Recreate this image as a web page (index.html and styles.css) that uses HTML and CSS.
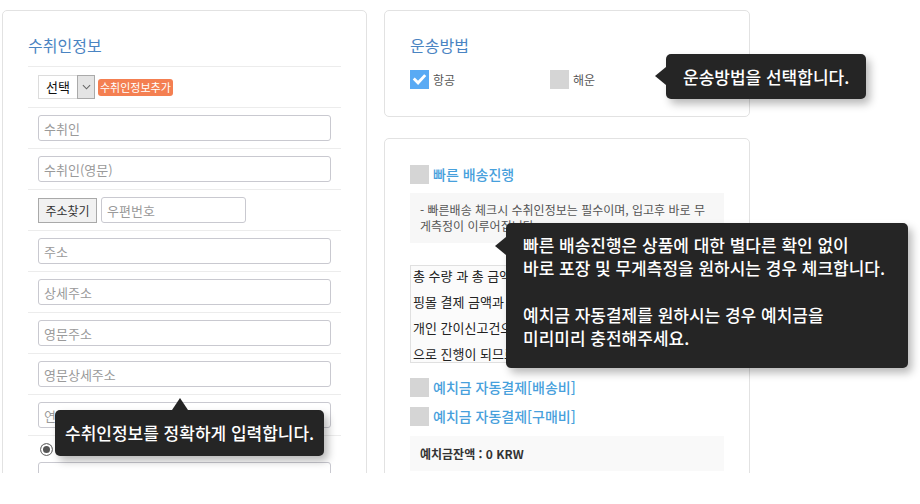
FILE: index.html
```html
<!DOCTYPE html>
<html lang="ko">

<head>
  <meta charset="UTF-8" />
  <title>배송대행 신청</title>
  <link rel="stylesheet" href="styles.css">
</head>

<body>
  <div class="page">
    <!-- 수취인정보 -->
    <div class="card receiver">
      <h3 class="card-title">수취인정보</h3>
      <ul class="form-list">
        <li class="row-select">
          <div class="select">
            <span class="select-text">선택</span>
            <span class="select-arrow">
              <svg viewBox="0 0 10 6" fill="none" stroke="#666" stroke-width="1.2">
                <polyline points="1 1 5 5 9 1"></polyline>
              </svg>
            </span>
          </div>
          <span class="badge">수취인정보추가</span>
        </li>
        <li><input type="text" placeholder="수취인" /></li>
        <li><input type="text" placeholder="수취인(영문)" /></li>
        <li class="row-zip">
          <button class="btn-zip">주소찾기</button>
          <input type="text" class="input-zip" placeholder="우편번호" />
        </li>
        <li><input type="text" placeholder="주소" /></li>
        <li><input type="text" placeholder="상세주소" /></li>
        <li><input type="text" placeholder="영문주소" /></li>
        <li><input type="text" placeholder="영문상세주소" /></li>
        <li><input type="text" placeholder="연락처" /></li>
        <li class="row-radio">
          <span class="radio"></span>
          <input type="text" />
        </li>
      </ul>
    </div>

    <div class="side">
      <!-- 운송방법 -->
      <div class="card shipping">
        <h3 class="card-title">운송방법</h3>
        <div class="options">
          <label class="option">
            <span class="check checked">
              <svg viewBox="0 0 20 20" fill="none" stroke="#fff" stroke-width="3" stroke-linecap="square">
                <polyline points="5 10 8.5 13.5 15 6.5"></polyline>
              </svg>
            </span>
            항공
          </label>
          <label class="option"><span class="check"></span>해운</label>
        </div>
      </div>

      <!-- 결제 옵션 -->
      <div class="card payment">
        <label class="check-title"><span class="check"></span>빠른 배송진행</label>
        <p class="notice">- 빠른배송 체크시 수취인정보는 필수이며, 입고후 바로 무게측정이 이루어집니다.</p>
        <div class="terms">
          <div>총 수량 과 총 금액은 구매대행 신청서 기준이며, 실제 쇼</div>
          <div>핑몰 결제 금액과 차이가 있을 수 있습니다. 150달러 이하</div>
          <div>개인 간이신고건으로 진행되며, 초과시 일반 수입신고</div>
          <div>으로 진행이 되므로 관부가세가 발생할 수 있습니다.</div>
        </div>
        <label class="check-title"><span class="check"></span>예치금 자동결제[배송비]</label>
        <label class="check-title"><span class="check"></span>예치금 자동결제[구매비]</label>
        <div class="balance">예치금잔액 : 0 KRW</div>
      </div>
    </div>

    <!-- 도움말 -->
    <div class="tip tip-up tip-receiver">수취인정보를 정확하게 입력합니다.</div>
    <div class="tip tip-left tip-shipping">운송방법을 선택합니다.</div>
    <div class="tip tip-left tip-express">
      빠른 배송진행은 상품에 대한 별다른 확인 없이<br>
      바로 포장 및 무게측정을 원하시는 경우 체크합니다.<br>
      <br>
      예치금 자동결제를 원하시는 경우 예치금을<br>
      미리미리 충전해주세요.
    </div>
  </div>
</body>

</html>
```

FILE: styles.css
```css
* {
  box-sizing: border-box;
}

body {
  margin: 0;
  background-color: #fff;
  font-family: "Noto Sans CJK KR", "Noto Sans", sans-serif;
  color: #333;
}

.page {
  position: relative;
  height: 473px;
  overflow: hidden;
  display: flex;
  align-items: flex-start;
  gap: 17px;
  padding: 10px 0 0 2px;
}

.card {
  border: 1px solid #e2e2e2;
  border-radius: 5px;
  background-color: #fff;
}

.card-title {
  margin: 0;
  font-size: 16px;
  font-weight: normal;
  line-height: 20px;
  color: #4a84c2;
}

/* 수취인정보 */
.receiver {
  width: 365px;
  padding: 0 25px;
}

.receiver .card-title {
  padding: 24px 0 11px;
}

.form-list {
  list-style: none;
  margin: 0;
  padding: 0;
}

.form-list li {
  border-top: 1px solid #ececec;
  padding: 7px 10px;
  display: flex;
  align-items: center;
  gap: 4px;
  min-height: 41px;
}

input {
  width: 293px;
  height: 26px;
  border: 1px solid #c9c9d0;
  border-radius: 3px;
  padding: 0 5px;
  font-family: inherit;
  font-size: 13px;
  color: #333;
}

input::placeholder {
  color: #9a9a9a;
}

.select {
  display: flex;
  height: 24px;
  border: 1px solid #dcdcdc;
  background-color: #fff;
}

.select-text {
  width: 38px;
  padding-left: 7px;
  font-size: 13px;
  line-height: 22px;
  color: #111;
}

.select-arrow {
  width: 18px;
  display: flex;
  align-items: center;
  justify-content: center;
  background-color: #e4e4e4;
  border: 1px solid #aaa;
  margin: -1px -1px -1px 0;
}

.select-arrow svg {
  width: 9px;
  height: 6px;
}

.badge {
  margin-left: -1px;
  padding: 0 2px;
  height: 17px;
  line-height: 17px;
  border-radius: 3px;
  background-color: #f47f51;
  color: #fff;
  font-size: 11px;
}

.btn-zip {
  width: 59px;
  height: 25px;
  padding: 0;
  border: 1px solid #a9a9a9;
  background-color: #f1f1f1;
  font-family: inherit;
  font-size: 12px;
  color: #333;
}

.input-zip {
  width: 145px;
}

.row-radio.row-radio {
  flex-direction: column;
  align-items: flex-start;
  gap: 6px;
}

.radio {
  width: 13px;
  height: 13px;
  margin-left: 2px;
  border: 1px solid #777;
  border-radius: 50%;
  background-color: #555;
  box-shadow: inset 0 0 0 2px #fff;
}

/* 오른쪽 영역 */
.side {
  width: 366px;
  display: flex;
  flex-direction: column;
  gap: 21px;
}

.shipping {
  padding: 0 25px 27px;
}

.shipping .card-title {
  padding: 24px 0 15px;
}

.options {
  display: flex;
}

.option {
  width: 140px;
  display: flex;
  align-items: center;
  gap: 4px;
  font-size: 12px;
  color: #555;
}

.check {
  width: 19px;
  height: 19px;
  flex: none;
  background-color: #d5d5d5;
}

.check.checked {
  background-color: #59aaf4;
}

.check svg {
  display: block;
  width: 19px;
  height: 19px;
}

.payment {
  height: 400px;
  padding: 25px 25px 0;
}

.check-title {
  display: flex;
  align-items: center;
  gap: 4px;
  height: 20px;
  font-size: 14px;
  font-weight: 500;
  color: #47a0dc;
}

.check-title + .check-title {
  margin-top: 9px;
}

.notice {
  margin: 9px 0 0;
  padding: 9px 10px;
  background-color: #f7f7f7;
  font-size: 12px;
  line-height: 16px;
  color: #555;
}

.terms {
  margin: 22px 0 14px;
  height: 98px;
  overflow: hidden;
  border: 1px solid #e0e0e0;
  background-color: #fbfbfb;
  padding: 0 2px;
  font-size: 13px;
  line-height: 26px;
  color: #222;
  white-space: nowrap;
}

.terms div:first-child {
  margin-top: -3px;
}

.balance {
  margin-top: 10px;
  padding: 9px 10px;
  background-color: #f9f9f9;
  font-size: 12px;
  font-weight: bold;
  line-height: 17px;
  color: #333;
}

/* 도움말 말풍선 */
.tip {
  position: absolute;
  background-color: #252525;
  color: #fff;
  border-radius: 5px;
  font-size: 17px;
  font-weight: 500;
  white-space: nowrap;
  box-shadow: 4px 5px 8px rgba(0, 0, 0, 0.28);
}

.tip::before {
  content: "";
  position: absolute;
  border: 0 solid transparent;
}

.tip-up::before {
  left: 117px;
  top: -12px;
  border-width: 0 8px 12px;
  border-bottom-color: #252525;
}

.tip-left::before {
  left: -11px;
  border-width: 9px 11px 9px 0;
  border-right-color: #252525;
}

.tip-receiver {
  left: 55px;
  top: 410px;
  padding: 0 10px;
  line-height: 46px;
}

.tip-shipping {
  left: 666px;
  top: 54px;
  padding: 0 17px;
  line-height: 45px;
}

.tip-shipping::before {
  top: 13px;
}

.tip-express {
  left: 506px;
  top: 223px;
  width: 402px;
  padding: 10px 17px 19px;
  line-height: 23.3px;
}

.tip-express::before {
  top: 14px;
}
```
